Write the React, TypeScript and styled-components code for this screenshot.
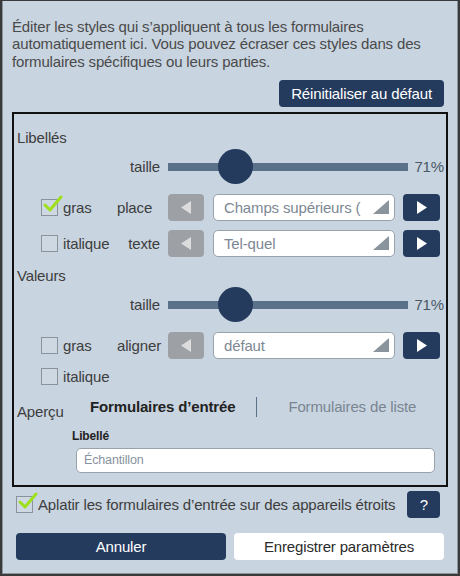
import React from "react";
import styled, { createGlobalStyle } from "styled-components";

const GlobalStyle = createGlobalStyle`
  html, body { margin: 0; padding: 0; background: #3a3a3a; }
  body { font-family: "Liberation Sans", Arial, sans-serif; letter-spacing: -0.15px; }
  * { box-sizing: border-box; }
`;

const NAVY = "#243b5e";
const TEXT = "#3d3d3d";

const Frame = styled.div`
  width: 460px;
  height: 576px;
  background: #3a3a3a;
  padding: 1px 2px 2px 2px;
`;

const Panel = styled.div`
  height: 100%;
  background: #c8d4e0;
  border: 1px solid #8d959d;
  border-top: none;
  padding: 17px 9px 0 9px;
  display: flex;
  flex-direction: column;
  color: ${TEXT};
  font-size: 15px;
`;

const Intro = styled.p`
  margin: 0;
  font-size: 15px;
  line-height: 17.3px;
  color: #4a4a4a;
`;

const TopActions = styled.div`
  display: flex;
  justify-content: flex-end;
  padding-right: 4px;
  margin-top: 10px;
`;

const Button = styled.button<{ $variant?: "navy" | "white" }>`
  height: 27px;
  border: none;
  border-radius: 4px;
  font-family: "Liberation Sans", Arial, sans-serif;
  font-size: 15px;
  letter-spacing: -0.15px;
  padding: 0 12px;
  cursor: pointer;
  background: ${(p) => (p.$variant === "white" ? "#ffffff" : NAVY)};
  color: ${(p) => (p.$variant === "white" ? "#2b2b2b" : "#ffffff")};
`;

const Box = styled.div`
  margin-top: 5px;
  height: 375px;
  border: 2px solid #111;
  padding: 14px 6px 0 3px;
  display: flex;
  flex-direction: column;
`;

const SectionTitle = styled.div<{ $gapTop?: number }>`
  height: 20px;
  line-height: 20px;
  margin-top: ${(p) => p.$gapTop ?? 0}px;
  font-size: 15px;
  color: ${TEXT};
`;

const SliderRow = styled.div`
  height: 38px;
  display: grid;
  grid-template-columns: 143px 1fr 33px;
  column-gap: 8px;
  align-items: center;
  margin-right: -4px;
`;

const RightLabel = styled.div`
  text-align: right;
  font-size: 15px;
  color: ${TEXT};
`;

const Track = styled.div`
  position: relative;
  height: 8px;
  background: #5b7089;
  margin-right: -5px;
`;

const Thumb = styled.div`
  position: absolute;
  top: 50%;
  width: 35px;
  height: 35px;
  margin-top: -18px;
  border-radius: 50%;
  background: ${NAVY};
`;

const Percent = styled.div`
  font-size: 15px;
  color: #4a5866;
  text-align: right;
`;

const ControlRow = styled.div<{ $gapTop?: number }>`
  height: 27px;
  margin-top: ${(p) => p.$gapTop ?? 9}px;
  display: grid;
  grid-template-columns: 143px 36px 1fr 37px;
  column-gap: 8px;
  align-items: center;
`;

const LeftCell = styled.div`
  display: grid;
  grid-template-columns: 76px 1fr;
  align-items: center;
  padding-left: 24px;
`;

const CheckWrap = styled.label`
  display: flex;
  align-items: center;
  gap: 5px;
  font-size: 15px;
  color: ${TEXT};
  white-space: nowrap;
`;

const CheckBox = styled.span`
  position: relative;
  display: inline-block;
  width: 17px;
  height: 17px;
  border: 1px solid #8a939c;
  background: #cdd8e3;
  flex: none;
`;

const CheckMark = styled.svg`
  position: absolute;
  left: 1px;
  top: -5px;
  overflow: visible;
`;

const CellLabel = styled.span<{ $align?: "start" | "end" }>`
  justify-self: ${(p) => p.$align ?? "end"};
  font-size: 15px;
  color: ${TEXT};
`;

const ArrowBtn = styled.div<{ $active?: boolean }>`
  height: 27px;
  border-radius: 4px;
  background: ${(p) => (p.$active ? NAVY : "#9da1a5")};
  display: flex;
  align-items: center;
  justify-content: center;
`;

const SelectBox = styled.div`
  position: relative;
  height: 27px;
  margin-left: 1px;
  background: #fff;
  border: 1px solid #9aa3ac;
  border-radius: 5px;
  padding: 0 34px 0 10px;
  font-size: 15px;
  line-height: 25px;
  color: #7c8894;
  white-space: nowrap;
  overflow: hidden;
`;

const Corner = styled.span`
  position: absolute;
  right: 5px;
  bottom: 6px;
  width: 0;
  height: 0;
  border-style: solid;
  border-width: 0 0 14px 16px;
  border-color: transparent transparent #8a949c transparent;
`;

const SingleRow = styled.div`
  margin-top: 9px;
  padding-left: 24px;
  display: flex;
`;

const PreviewRow = styled.div`
  margin-top: 12px;
  display: flex;
  align-items: flex-start;
`;

const PreviewLabel = styled.div`
  width: 73px;
  font-size: 15px;
  color: ${TEXT};
  padding-top: 6px;
`;

const Tab = styled.div<{ $active?: boolean }>`
  font-size: 15px;
  font-weight: ${(p) => (p.$active ? 700 : 400)};
  color: ${(p) => (p.$active ? "#222" : "#7a8592")};
  height: 20px;
  line-height: 20px;
`;

const TabDivider = styled.div`
  width: 1px;
  height: 20px;
  background: #5b7089;
  margin: 0 31px 0 21px;
`;

const FieldLabel = styled.div`
  margin: 9px 0 0 55px;
  font-size: 12px;
  font-weight: 700;
  color: #222;
`;

const SampleInput = styled.div`
  margin: 5px 5px 0 59px;
  height: 25px;
  background: #fff;
  border: 1px solid #9aa3ac;
  border-radius: 5px;
  padding-left: 7px;
  font-size: 12.5px;
  line-height: 23px;
  color: #8793a0;
`;

const Footer = styled.div`
  padding: 0 4px;
  display: flex;
  flex-direction: column;
`;

const FlatRow = styled.div`
  margin-top: 4px;
  display: flex;
  align-items: center;
  height: 27px;
`;

const HelpBtn = styled(Button)`
  width: 33px;
  padding: 0;
  margin-left: 12px;
`;

const ButtonRow = styled.div`
  margin-top: 15px;
  display: grid;
  grid-template-columns: 1fr 1fr;
  column-gap: 8px;
`;

const Check = ({ checked }: { checked?: boolean }) => (
  <CheckBox>
    {checked && (
      <CheckMark width="20" height="18" viewBox="0 0 20 18">
        <path d="M2 10 L7 15 L18 2" fill="none" stroke="#9ee01c" strokeWidth="3" strokeLinecap="round" strokeLinejoin="round" />
      </CheckMark>
    )}
  </CheckBox>
);

const LeftTri = () => (
  <svg width="10" height="13" viewBox="0 0 10 13">
    <polygon points="10,0 10,13 0,6.5" fill="#dcdcdc" />
  </svg>
);
const RightTri = () => (
  <svg width="10" height="13" viewBox="0 0 10 13">
    <polygon points="0,0 0,13 10,6.5" fill="#ffffff" />
  </svg>
);

const Slider = ({ value }: { value: number }) => {
  const min = 50;
  const max = 136;
  const frac = (value - min) / (max - min);
  return (
    <SliderRow>
      <RightLabel>taille</RightLabel>
      <Track>
        <Thumb style={{ left: `calc(${frac * 100}% - ${frac * 35}px)` }} />
      </Track>
      <Percent>{value}%</Percent>
    </SliderRow>
  );
};

const Control = ({
  check,
  checked,
  label,
  labelAlign,
  value,
  gapTop,
}: {
  check: string;
  checked?: boolean;
  label: string;
  labelAlign?: "start" | "end";
  value: string;
  gapTop?: number;
}) => (
  <ControlRow $gapTop={gapTop}>
    <LeftCell>
      <CheckWrap>
        <Check checked={checked} />
        {check}
      </CheckWrap>
      <CellLabel $align={labelAlign}>{label}</CellLabel>
    </LeftCell>
    <ArrowBtn>
      <LeftTri />
    </ArrowBtn>
    <SelectBox>
      {value}
      <Corner />
    </SelectBox>
    <ArrowBtn $active>
      <RightTri />
    </ArrowBtn>
  </ControlRow>
);

export default function App() {
  return (
    <>
      <GlobalStyle />
      <Frame>
        <Panel>
          <Intro>
            Éditer les styles qui s’appliquent à tous les formulaires automatiquement ici. Vous pouvez écraser ces styles dans des formulaires spécifiques ou leurs parties.
          </Intro>
          <TopActions>
            <Button>Réinitialiser au défaut</Button>
          </TopActions>
          <Box>
            <SectionTitle>Libellés</SectionTitle>
            <Slider value={71} />
            <Control check="gras" checked label="place" labelAlign="start" value="Champs supérieurs (" gapTop={8} />
            <Control check="italique" label="texte" value="Tel-quel" />
            <SectionTitle $gapTop={9}>Valeurs</SectionTitle>
            <Slider value={71} />
            <Control check="gras" label="aligner" labelAlign="start" value="défaut" gapTop={8} />
            <SingleRow>
              <CheckWrap>
                <Check />
                italique
              </CheckWrap>
            </SingleRow>
            <PreviewRow>
              <PreviewLabel>Aperçu</PreviewLabel>
              <Tab $active>Formulaires d’entrée</Tab>
              <TabDivider />
              <Tab>Formulaires de liste</Tab>
            </PreviewRow>
            <FieldLabel>Libellé</FieldLabel>
            <SampleInput>Échantillon</SampleInput>
          </Box>
          <Footer>
            <FlatRow>
              <CheckWrap>
                <Check checked />
                Aplatir les formulaires d’entrée sur des appareils étroits
              </CheckWrap>
              <HelpBtn>?</HelpBtn>
            </FlatRow>
            <ButtonRow>
              <Button>Annuler</Button>
              <Button $variant="white">Enregistrer paramètres</Button>
            </ButtonRow>
          </Footer>
        </Panel>
      </Frame>
    </>
  );
}
